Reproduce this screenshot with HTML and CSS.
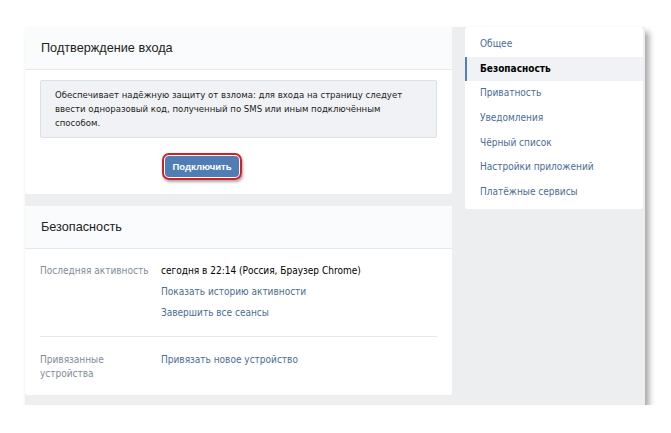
FILE: index.html
```html
<!DOCTYPE html>
<html lang="ru">
<head>
    <meta charset="UTF-8">
    <title>Настройки безопасности</title>
    <link rel="stylesheet" href="styles.css">
</head>
<body>
    <div class="frame">
        <div class="main">
            <div class="card">
                <div class="card-header">Подтверждение входа</div>
                <div class="card-body">
                    <div class="info-box">
                        Обеспечивает надёжную защиту от взлома: для входа на страницу следует<br>
                        ввести одноразовый код, полученный по SMS или иным подключённым<br>
                        способом.
                    </div>
                    <div class="button-row">
                        <span class="highlight">
                            <button class="btn">Подключить</button>
                        </span>
                    </div>
                </div>
            </div>

            <div class="card">
                <div class="card-header">Безопасность</div>
                <div class="rows">
                    <div class="row">
                        <div class="row-label">Последняя активность</div>
                        <div class="row-value">
                            <div class="value-line">сегодня в 22:14 (Россия, Браузер Chrome)</div>
                            <a class="link" href="#">Показать историю активности</a>
                            <a class="link" href="#">Завершить все сеансы</a>
                        </div>
                    </div>
                    <div class="row">
                        <div class="row-label">Привязанные<br>устройства</div>
                        <div class="row-value">
                            <a class="link first" href="#">Привязать новое устройство</a>
                        </div>
                    </div>
                </div>
            </div>
        </div>

        <div class="side-menu">
            <a class="menu-item" href="#">Общее</a>
            <a class="menu-item active" href="#">Безопасность</a>
            <a class="menu-item" href="#">Приватность</a>
            <a class="menu-item" href="#">Уведомления</a>
            <a class="menu-item" href="#">Чёрный список</a>
            <a class="menu-item" href="#">Настройки приложений</a>
            <a class="menu-item" href="#">Платёжные сервисы</a>
        </div>
    </div>
</body>
</html>
```

FILE: styles.css
```css
body {
    margin: 0;
    padding: 27px 0 0 25px;
    background-color: #fff;
    font-family: "DejaVu Sans Condensed", "Liberation Sans", sans-serif;
    font-size: 10px;
    color: #000;
}
.frame {
    display: flex;
    gap: 13px;
    width: 620px;
    height: 378px;
    background-color: #edeef0;
    box-shadow: 4px 5px 6px rgba(0, 0, 0, 0.35);
}
.main {
    width: 427px;
    display: flex;
    flex-direction: column;
    gap: 12px;
}
.card {
    background-color: #fff;
    border-radius: 0 0 3px 3px;
}
.card-header {
    height: 42px;
    line-height: 42px;
    padding-left: 16px;
    font-family: "Liberation Sans", Arial, sans-serif;
    font-size: 12.7px;
    color: #222;
    background-color: #fafbfc;
    border-bottom: 1px solid #e7e8ec;
}

.card-body {
    padding: 10px 15px 0 15px;
    height: 114px;
}
.info-box {
    height: 42px;
    padding: 7px 14px;
    background-color: #f0f2f5;
    border: 1px solid #dce1e6;
    border-radius: 2px;
    font-size: 9.5px;
    line-height: 14px;
    color: #222;
    white-space: nowrap;
}
.button-row {
    display: flex;
    justify-content: center;
    margin-top: 15px;
    padding-right: 73px;
}
.highlight {
    display: inline-block;
    padding: 1px;
    border: 2px solid #d0202a;
    border-radius: 7px;
    box-shadow: 1px 2px 3px rgba(0, 0, 0, 0.35);
}
.btn {
    display: block;
    width: 74px;
    height: 21px;
    padding: 0;
    background-color: #4f7db4;
    border: none;
    border-radius: 4px;
    color: #fff;
    font-family: "Liberation Sans", Arial, sans-serif;
    font-size: 9.5px;
    font-weight: bold;
}

.rows {
    padding: 0 15px;
}
.row {
    display: flex;
    padding: 15px 0 16px 0;
}
.row + .row {
    border-top: 1px solid #e7e8ec;
    padding-top: 16px;
    padding-bottom: 14px;
}
.row-label {
    width: 121px;
    color: #818c99;
    line-height: 14px;
}
.row-value {
    display: flex;
    flex-direction: column;
    gap: 7px;
    line-height: 14px;
}
.link {
    color: #4a6d94;
    text-decoration: none;
}

.side-menu {
    width: 178px;
    height: 174px;
    padding: 5px 0 3px 0;
    background-color: #fff;
    border-radius: 3px;
    display: flex;
    flex-direction: column;
}
.menu-item {
    height: 24.7px;
    line-height: 24.7px;
    padding-left: 13px;
    color: #4a6d94;
    text-decoration: none;
    border-left: 2px solid transparent;
}
.menu-item.active {
    background-color: #f0f2f5;
    border-left-color: #5181b8;
    color: #000;
    font-weight: bold;
}
```
